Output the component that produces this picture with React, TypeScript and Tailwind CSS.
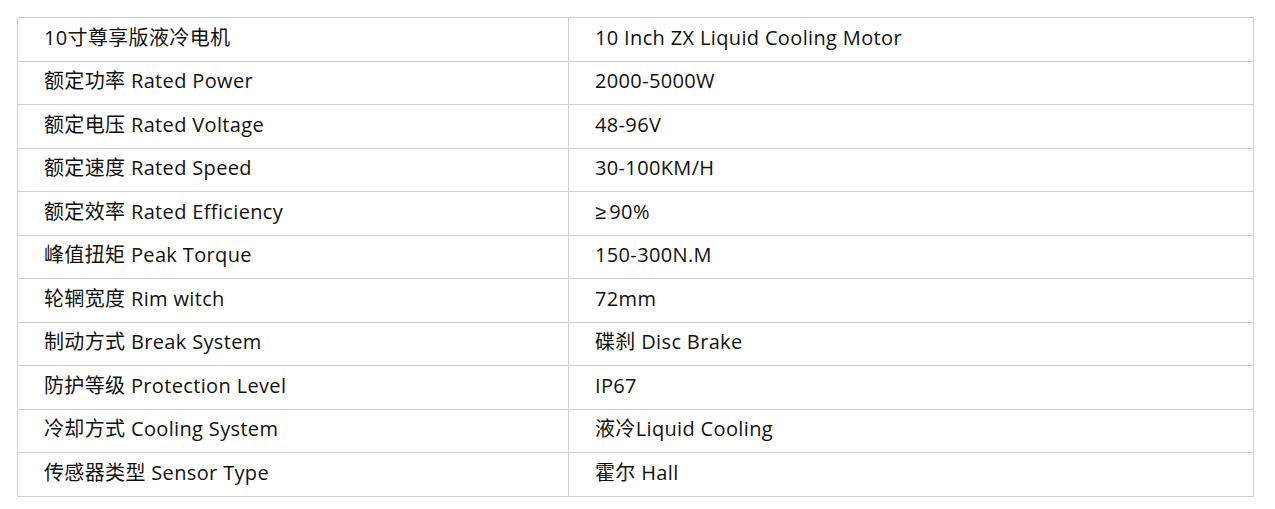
const rows: [string, React.ReactNode][] = [
  ['10寸尊享版液冷电机', '10 Inch ZX Liquid Cooling Motor'],
  ['额定功率 Rated Power', '2000-5000W'],
  ['额定电压 Rated Voltage', '48-96V'],
  ['额定速度 Rated Speed', '30-100KM/H'],
  ['额定效率 Rated Efficiency', <><span className="font-['Liberation_Sans',sans-serif] mr-[3px]">≥</span>90%</>],
  ['峰值扭矩 Peak Torque', '150-300N.M'],
  ['轮辋宽度 Rim witch', '72mm'],
  ['制动方式 Break System', '碟刹 Disc Brake'],
  ['防护等级 Protection Level', 'IP67'],
  ['冷却方式 Cooling System', '液冷Liquid Cooling'],
  ['传感器类型 Sensor Type', '霍尔 Hall'],
];

export default function App() {
  return (
    <div className="min-h-screen bg-white pt-[17px] pl-[17px] font-['Open_Sans','Noto_Sans_CJK_SC',sans-serif] text-[#111]">
      <table className="w-[1237px] border-collapse table-fixed text-[20px] tracking-[0.35px]">
        <colgroup>
          <col className="w-[551px]" />
          <col />
        </colgroup>
        <tbody>
          {rows.map(([label, value]) => (
            <tr key={label} className="h-[43.5px]">
              <td className="border border-[#d0d0d0] pl-[26px] pb-[3px] leading-none">{label}</td>
              <td className="border border-[#d0d0d0] pl-[26px] pb-[3px] leading-none">{value}</td>
            </tr>
          ))}
        </tbody>
      </table>
    </div>
  );
}
